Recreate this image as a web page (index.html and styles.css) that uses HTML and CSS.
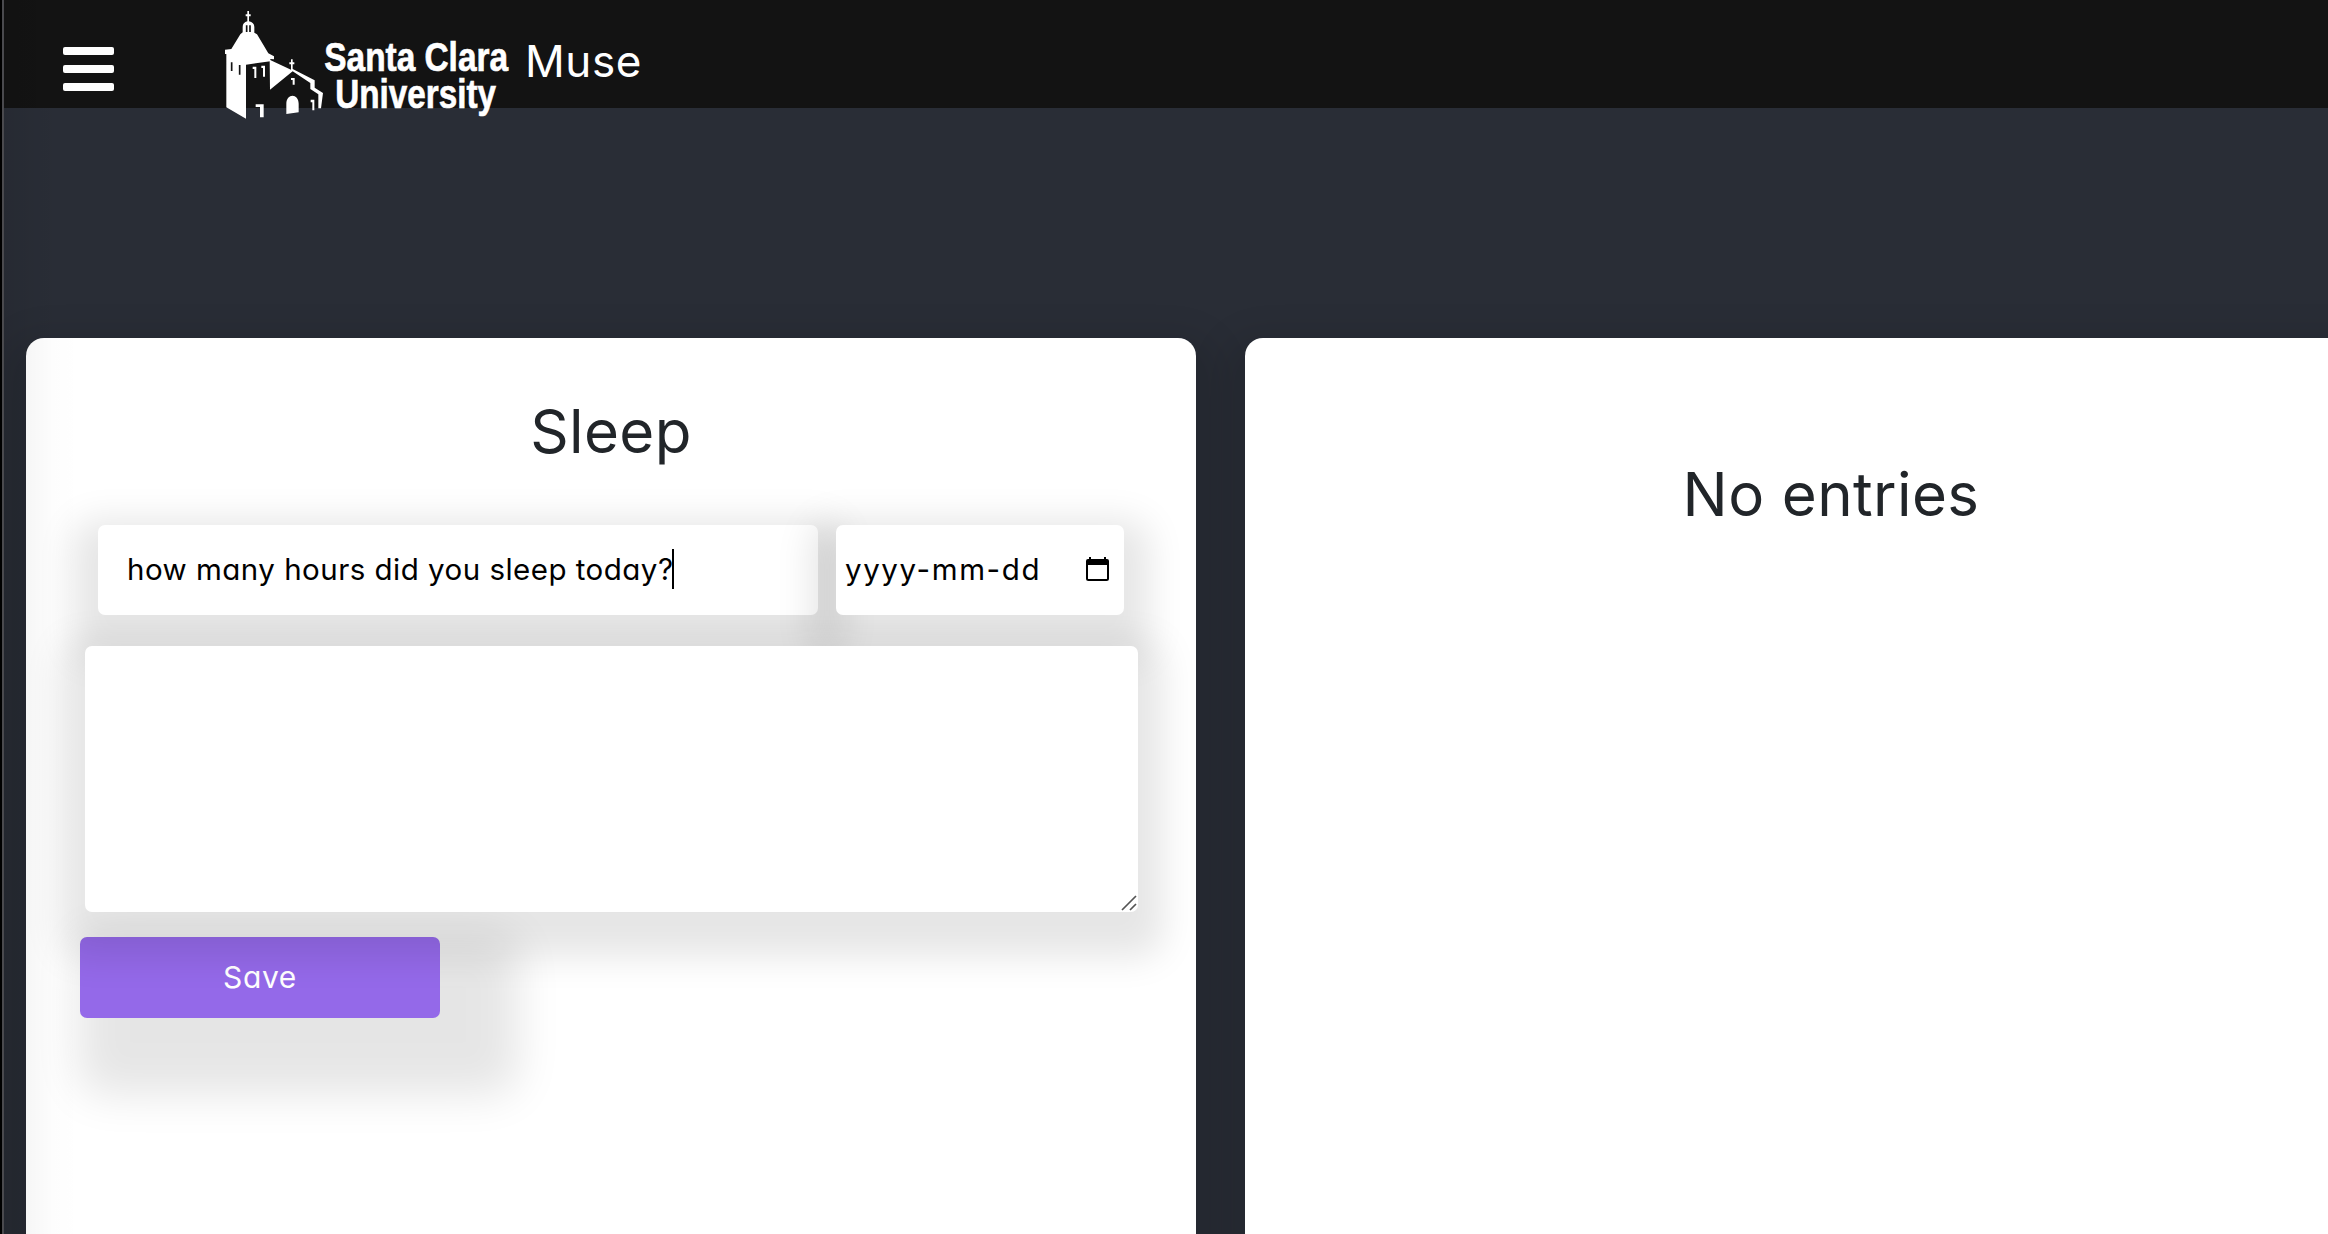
FILE: index.html
```html
<!DOCTYPE html>
<html lang="en">
<head>
<meta charset="utf-8">
<title>Muse</title>
<link rel="stylesheet" href="styles.css">
</head>
<body>
<div class="app">
  <header class="topbar">
    <button class="menu" aria-label="Menu"><span class="bar"></span><span class="bar"></span><span class="bar"></span></button>
    <svg class="logo" viewBox="0 0 900 390" width="300" height="130" role="img" aria-label="Santa Clara University">
      <g fill="#fff">
        <path d="M97 33h5v10h5v6h-5v15c10 2 16 8 16 17v17l8 5 34 57 17 9v9l-11-1v7l-73 10V356L34 322V162h-4v-13l19-2 27-44 7-6V81c0-9 5-15 14-17V49h-5v-6h5z"/>
        <path fill-rule="evenodd" d="M164 179l64 30v-16h-5v-6h5v-9h5v9h5v6h-5v14l66 34v22l25 16-6 46h-8v-42l-24-16v-18l-53-35-68 55z"/>
        <path d="M113 200h11v34h-6v-27h-5zM139 197h11v33h-6v-26h-5zM228 234h11v20h-6v-14h-5zM122 313h24v39h-11v-31h-13zM214 342v-31c0-32 37-32 37 0v26zM287 299h11v32h-6v-24h-5z"/>
      </g>
      <path d="M50 187v26M74 195v29M95 76v20M105 76v20" stroke="#131313" stroke-width="5" fill="none"/>
      <text class="logo-text" x="328" y="213" textLength="551" lengthAdjust="spacingAndGlyphs">Santa Clara</text>
      <text class="logo-text" x="361" y="325" textLength="482" lengthAdjust="spacingAndGlyphs">University</text>
    </svg>
    <span class="brand">Muse</span>
  </header>
  <main class="board">
    <section class="card entry">
      <h1 class="title">Sleep</h1>
      <div class="fields">
        <div class="field prompt"><span class="prompt-text">how many hours did you sleep today?</span><span class="caret"></span></div>
        <div class="field date"><span class="date-text">yyyy-mm-dd</span>
          <svg class="calendar" viewBox="0 0 23 24" width="23" height="24"><path fill="none" stroke="#000" stroke-width="2" d="M1 6v15.500Q1 23 2.500 23h18q1.500 0 1.500-1.500V6"/><path d="M2 2h1V0h2v2h13V0h2v2h1q2 0 2 2v4H0V4q0-2 2-2z"/></svg>
        </div>
      </div>
      <div class="field notes"><svg class="grip" viewBox="0 0 16 16" width="16" height="16"><path d="M1 15L15 1M9 15l6-6" stroke="#555" stroke-width="1.700"/></svg></div>
      <button class="save">Save</button>
    </section>
    <section class="card list"><h1 class="title">No entries</h1></section>
  </main>
</div>
</body>
</html>
```
FILE: styles.css
```css
* { box-sizing: border-box; }
body {
  margin: 0;
  background: #000;
  font-family: Inter, "Noto Sans", sans-serif;
  font-feature-settings: "cv11";
  color: #212529;
}
.app {
  position: relative;
  height: 1234px;
  margin-left: 2px;
  border-left: 2px solid #4a4a4e;
  background: #292d36;
  overflow: hidden;
}
.app::after {
  content: "";
  position: absolute;
  inset: 0 auto 0 0;
  width: 76px;
  background: linear-gradient(90deg, rgba(0,0,0,.07), rgba(0,0,0,.035) 30%, rgba(0,0,0,.008) 65%, transparent);
  pointer-events: none;
}
.topbar {
  display: flex;
  align-items: flex-start;
  height: 108px;
  padding-left: 59px;
  background: #131313;
}
.menu {
  display: flex;
  flex-direction: column;
  gap: 10px;
  width: 51px;
  margin: 47px 101px 0 0;
  padding: 0;
  border: 0;
  background: none;
}
.bar { height: 8px; width: 100%; border-radius: 2px; background: #fff; }
.logo { flex: none; overflow: visible; position: relative; z-index: 1; }
.logo-text { font: bold 121px "Liberation Sans", sans-serif; fill: #fff; stroke: #fff; stroke-width: 2px; }
.brand {
  margin: 35px 0 0 10px;
  font-size: 44px;
  font-weight: 400;
  line-height: 52px;
  letter-spacing: .6px;
  color: #fff;
}
.board {
  display: grid;
  grid-template-columns: 1170px 1172px;
  column-gap: 49px;
  width: max-content;
  padding: 230px 0 0 22px;
}
.card {
  height: 1000px;
  border-radius: 18px;
  background: #fff;
  box-shadow: 0 20px 34px 24px rgba(0,0,0,.1);
}
.title {
  margin: 0;
  font-size: 60px;
  font-weight: 400;
  line-height: 70px;
  letter-spacing: .4px;
  text-align: center;
}
.entry .title { padding-top: 58px; }
.list .title { padding-top: 121px; }
.fields {
  display: flex;
  gap: 18px;
  margin: 59px 72px 31px;
}
.field {
  display: flex;
  align-items: center;
  border-radius: 7px;
  background: #fff;
  box-shadow: 0 20px 36px 25px rgba(0,0,0,.1);
  color: #000;
  font-size: 29.500px;
  white-space: nowrap;
}
.prompt { width: 720px; height: 90px; padding: 0 0 3px 29px; }
.prompt-text { letter-spacing: .48px; }
.caret { width: 2px; height: 40px; margin-left: -1px; background: #000; }
.date { width: 288px; height: 90px; padding: 0 15px 2px 9px; justify-content: space-between; }
.date-text { letter-spacing: 1.6px; }
.notes {
  position: relative;
  width: 1053px;
  height: 266px;
  margin-left: 59px;
  padding: 0 1px 1px 0;
  align-items: flex-end;
  justify-content: flex-end;
}
.save {
  display: block;
  width: 360px;
  height: 81px;
  margin: 25px 0 0 54px;
  padding: 0 0 1px;
  border: 0;
  border-radius: 7px;
  background: #9469e9;
  box-shadow: 38px 37px 44px 40px rgba(0,0,0,.1);
  color: #fff;
  font: 400 30px Inter, sans-serif;
  font-feature-settings: "cv11";
  letter-spacing: .6px;
}
```
